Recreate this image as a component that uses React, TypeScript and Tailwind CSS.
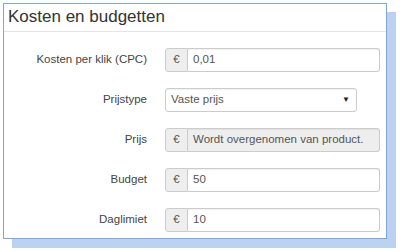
const rows = [
  { label: "Kosten per klik (CPC)", value: "0,01", euro: true },
  { label: "Prijstype", value: "Vaste prijs", select: true },
  { label: "Prijs", value: "Wordt overgenomen van product.", euro: true, disabled: true },
  { label: "Budget", value: "50", euro: true },
  { label: "Daglimiet", value: "10", euro: true },
];

export default function App() {
  return (
    <div className="w-[400px] h-[251px] bg-white pt-[3px] pl-[3px] font-['Liberation_Sans',Arial,sans-serif] text-[#333]">
      <div className="w-[384px] h-[236px] bg-white border border-[#7ea6e0] shadow-[9px_9px_0_#bdd2f0]">
        <div className="h-[28px] border-b border-[#e5e5e5] pl-[4px] pt-[1px]">
          <h1 className="text-[17px] leading-[24px] text-[#333]">Kosten en budgetten</h1>
        </div>
        <div className="flex flex-col gap-4 pt-4">
          {rows.map((r) => (
            <div key={r.label} className="flex items-center h-6">
              <label className="w-[143px] text-right text-[11.5px] text-[#444]">{r.label}</label>
              <div className="ml-[18px]">
                {r.select ? (
                  <div className="w-[192px] h-6 border border-[#ccc] rounded-[3px] flex items-center justify-between pl-[5px] pr-[6px] text-[11.5px] text-[#555] shadow-[inset_0_1px_1px_rgba(0,0,0,0.06)]">
                    <span>{r.value}</span>
                    <span className="text-[8px] text-[#222]">▼</span>
                  </div>
                ) : (
                  <div className="w-[215px] h-6 flex text-[11.5px]">
                    <div className="w-[23px] bg-[#eee] border border-[#ccc] rounded-l-[3px] flex items-center justify-center text-[#555]">€</div>
                    <div className={`flex-1 border border-l-0 border-[#ccc] rounded-r-[3px] flex items-center pl-[5px] text-[#555] shadow-[inset_0_1px_1px_rgba(0,0,0,0.06)] ${r.disabled ? "bg-[#eee]" : "bg-white"}`}>
                      {r.value}
                    </div>
                  </div>
                )}
              </div>
            </div>
          ))}
        </div>
      </div>
    </div>
  );
}
